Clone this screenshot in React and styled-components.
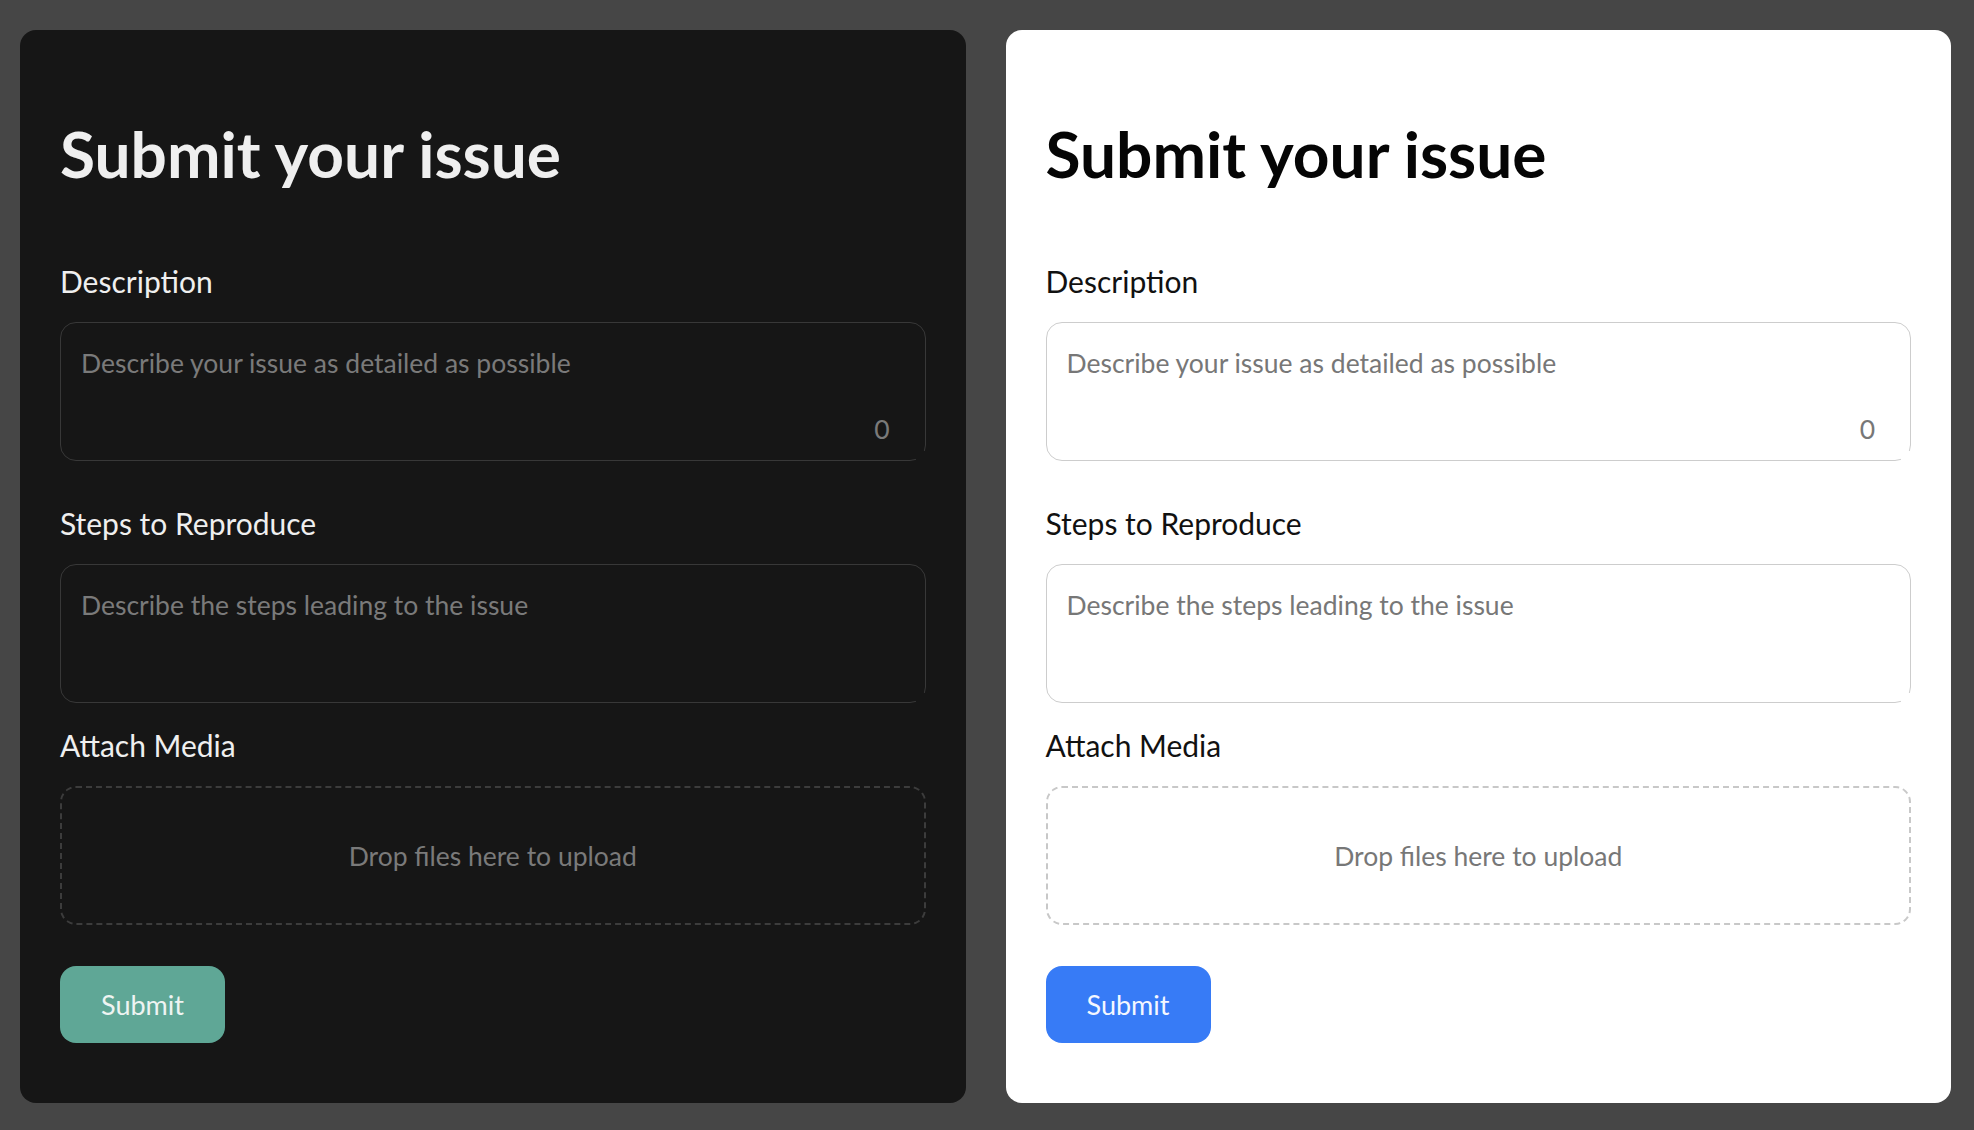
import React from "react"
import styled, { createGlobalStyle } from "styled-components"

const themes = {
  dark: {
    panel: "#161616",
    text: "#efefef",
    title: "#efefef",
    border: "#383838",
    placeholder: "#7a7a7a",
    dash: "#3c3c3c",
    button: "#5fa796",
    buttonText: "#eef4f2",
  },
  light: {
    panel: "#ffffff",
    text: "#111111",
    title: "#050505",
    border: "#cdcdcd",
    placeholder: "#777777",
    dash: "#c8c8c8",
    button: "#377bf6",
    buttonText: "#f4f7ff",
  },
}

const GlobalStyle = createGlobalStyle`
  * { box-sizing: border-box; }
  html, body {
    margin: 0;
    background: #464646;
    font-family: Lato, "Noto Sans", sans-serif;
  }
`

export default function App() {
  return (
    <>
      <GlobalStyle />
      <Page>
        <IssueForm t={themes.dark} />
        <IssueForm t={themes.light} />
      </Page>
    </>
  )
}

function IssueForm({ t }) {
  return (
    <Panel $t={t}>
      <Title $t={t}>Submit your issue</Title>
      <Label $t={t}>Description</Label>
      <AreaWrap $t={t} $gap={44}>
        <Area $t={t} placeholder="Describe your issue as detailed as possible" />
        <Counter $t={t}>0</Counter>
      </AreaWrap>
      <Label $t={t}>Steps to Reproduce</Label>
      <AreaWrap $t={t} $gap={24}>
        <Area $t={t} placeholder="Describe the steps leading to the issue" />
      </AreaWrap>
      <Label $t={t}>Attach Media</Label>
      <DropZone $t={t}>Drop files here to upload</DropZone>
      <SubmitButton $t={t}>Submit</SubmitButton>
    </Panel>
  )
}

const Page = styled.div`
  display: grid;
  grid-template-columns: 1fr 1fr;
  gap: 40px;
  padding: 30px 23px 28px 20px;
  min-height: 1130px;
`

const Panel = styled.section`
  display: flex;
  flex-direction: column;
  align-items: flex-start;
  background: ${(p) => p.$t.panel};
  border-radius: 16px;
  padding: 88px 40px 60px;
`

const Title = styled.h1`
  margin: 0 0 73px;
  font-size: 64px;
  line-height: 72px;
  font-weight: 700;
  color: ${(p) => p.$t.title};
`

const Label = styled.div`
  margin-bottom: 23px;
  font-size: 30px;
  line-height: 36px;
  color: ${(p) => p.$t.text};
`

const AreaWrap = styled.div`
  position: relative;
  width: 100%;
  height: 139px;
  margin-bottom: ${(p) => p.$gap}px;
  &::after {
    content: "";
    position: absolute;
    right: -1px;
    bottom: -1px;
    width: 11px;
    height: 11px;
    background: ${(p) => p.$t.panel};
  }
`

const Area = styled.textarea`
  display: block;
  width: 100%;
  height: 100%;
  resize: none;
  padding: 23px 20px 20px;
  border: 1.5px solid ${(p) => p.$t.border};
  border-radius: 16px;
  background: transparent;
  font-family: Lato, "Noto Sans", sans-serif;
  font-size: 26.5px;
  line-height: 34px;
  color: ${(p) => p.$t.text};
  outline: none;
  &::placeholder {
    color: ${(p) => p.$t.placeholder};
  }
`

const Counter = styled.span`
  position: absolute;
  right: 36px;
  bottom: 19px;
  font-size: 26.5px;
  line-height: 1;
  color: ${(p) => p.$t.placeholder};
`

const DropZone = styled.div`
  display: flex;
  align-items: center;
  justify-content: center;
  width: 100%;
  height: 139px;
  margin-bottom: 41px;
  border: 2px dashed ${(p) => p.$t.dash};
  border-radius: 16px;
  font-size: 26.5px;
  color: ${(p) => p.$t.placeholder};
`

const SubmitButton = styled.button`
  width: 165px;
  height: 77px;
  border: none;
  border-radius: 16px;
  background: ${(p) => p.$t.button};
  color: ${(p) => p.$t.buttonText};
  font-family: Lato, "Noto Sans", sans-serif;
  font-size: 27px;
  cursor: pointer;
`
